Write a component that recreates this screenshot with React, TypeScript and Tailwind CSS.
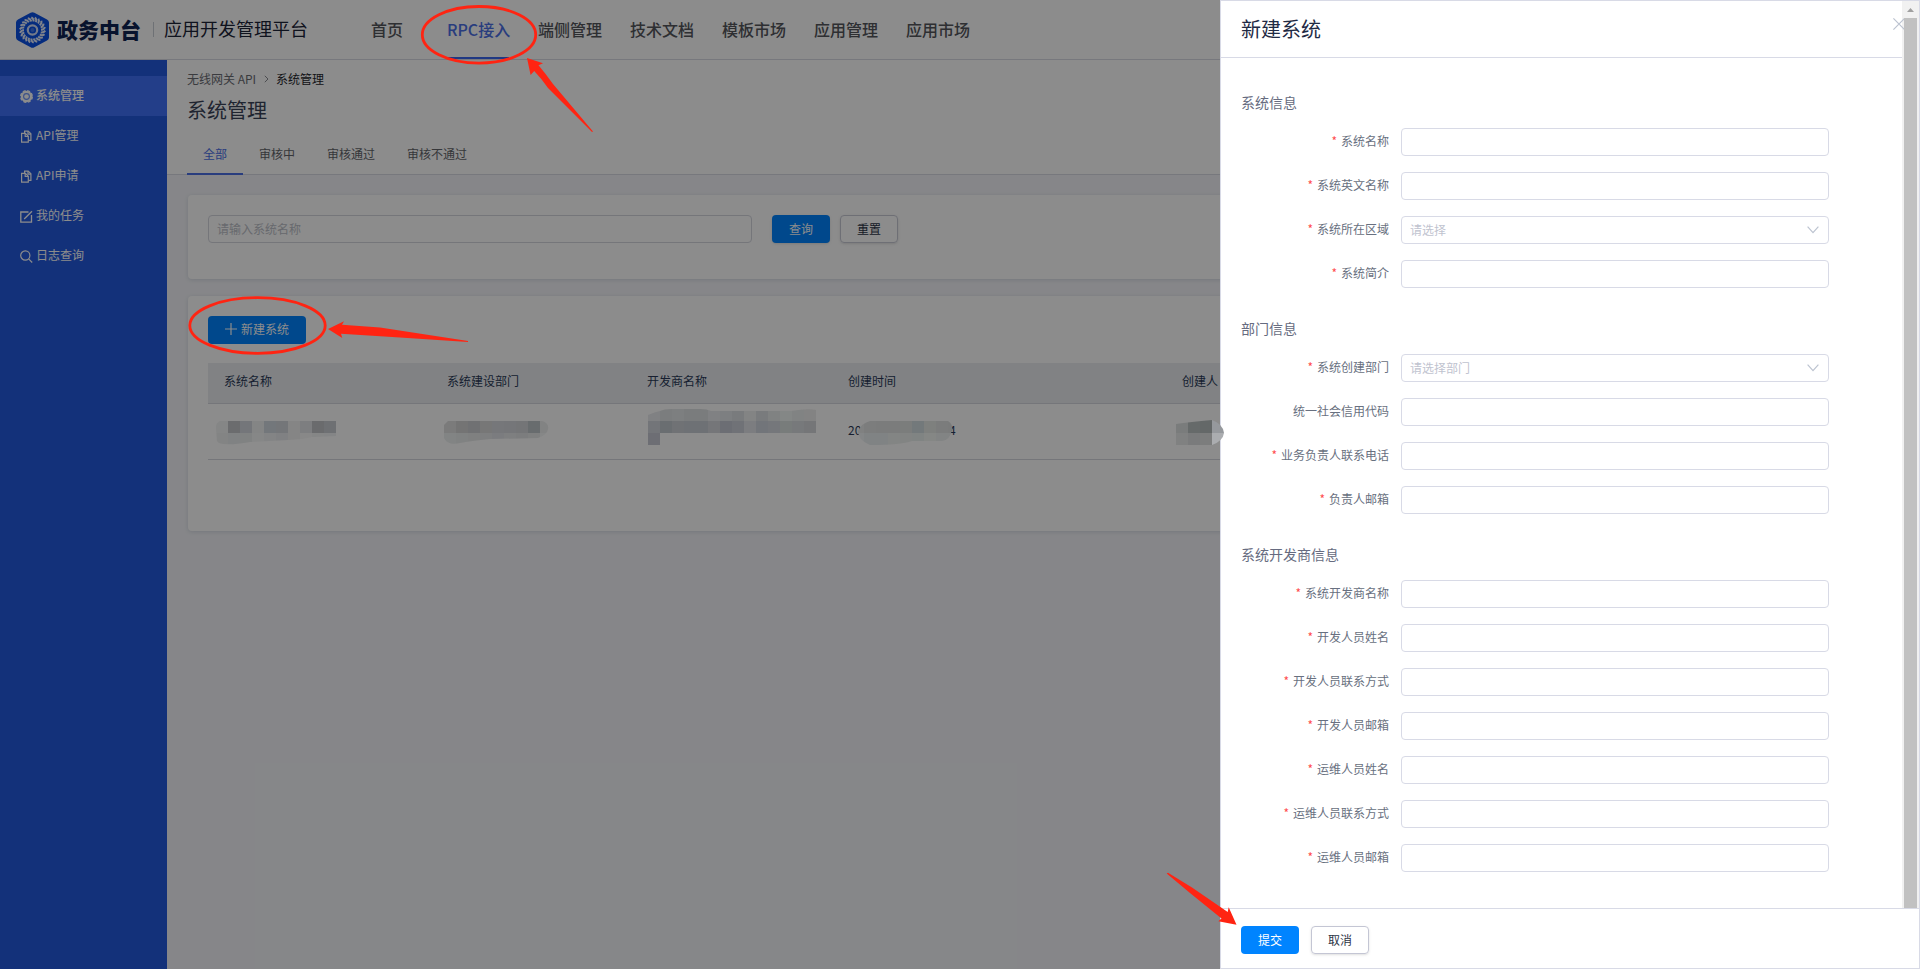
import React from "react";

type Field = { label: string; required?: boolean; placeholder?: string; select?: boolean };
type Section = { title: string; fields: Field[] };

const sections: Section[] = [
  {
    title: "系统信息",
    fields: [
      { label: "系统名称", required: true },
      { label: "系统英文名称", required: true },
      { label: "系统所在区域", required: true, placeholder: "请选择", select: true },
      { label: "系统简介", required: true },
    ],
  },
  {
    title: "部门信息",
    fields: [
      { label: "系统创建部门", required: true, placeholder: "请选择部门", select: true },
      { label: "统一社会信用代码" },
      { label: "业务负责人联系电话", required: true },
      { label: "负责人邮箱", required: true },
    ],
  },
  {
    title: "系统开发商信息",
    fields: [
      { label: "系统开发商名称", required: true },
      { label: "开发人员姓名", required: true },
      { label: "开发人员联系方式", required: true },
      { label: "开发人员邮箱", required: true },
      { label: "运维人员姓名", required: true },
      { label: "运维人员联系方式", required: true },
      { label: "运维人员邮箱", required: true },
    ],
  },
];

function Logo() {
  return (
    <svg width="33" height="36" viewBox="0 0 33 36" className="shrink-0">
      <path d="M14.6 .8a4 4 0 0 1 3.8 0L31 7.6a3.4 3.4 0 0 1 2 3v14.8a3.4 3.4 0 0 1-2 3l-12.6 6.8a4 4 0 0 1-3.8 0L2 28.400a3.400 3.400 0 0 1-2-3V10.600a3.400 3.400 0 0 1 2-3z" fill="#0a50e6" />
      {Array.from({ length: 22 }, (_, i) => (
        <path
          key={i}
          d="M15.300 5.300q2.400 1.200 2.400 4.200"
          fill="none"
          stroke="#e6edfd"
          strokeWidth="2"
          transform={`rotate(${(i * 360) / 22} 16.500 18)`}
        />
      ))}
      <circle cx="16.500" cy="18" r="4.700" fill="none" stroke="#d3dffb" strokeWidth="2.200" />
      <circle cx="16.500" cy="18" r="2" fill="#3f76ec" />
    </svg>
  );
}

function GearIcon() {
  return (
    <svg width="13" height="13" viewBox="0 0 13 13">
      <circle cx="6.500" cy="6.500" r="5.700" fill="#fff" />
      <circle cx="6.500" cy="6.500" r="5.800" fill="none" stroke="#fff" strokeWidth="1.400" strokeDasharray="3 1.555" />
      <circle cx="6.500" cy="6.500" r="2.900" fill="none" stroke="#6d92fa" strokeWidth="1.100" />
    </svg>
  );
}

function CopyIcon() {
  return (
    <svg width="13" height="13" viewBox="0 0 13 13" fill="none" stroke="#fff" strokeWidth="1.200">
      <path d="M4.600 3.200V1.100h3.600l2.700 2.700v6.600H8.700" />
      <path d="M1.600 3.400h3.800l2.900 2.900v5.900H1.600z" />
      <path d="M5.200 3.400v3.100h3.100M8 1.100v3h2.900" />
    </svg>
  );
}

function FormIcon() {
  return (
    <svg width="13" height="13" viewBox="0 0 13 13" fill="none" stroke="#fff" strokeWidth="1.300">
      <path d="M8.500 2H.8v10.200h10.700V5" />
      <path d="M4.200 9 12 1.200" />
    </svg>
  );
}

function SearchIcon() {
  return (
    <svg width="13" height="13" viewBox="0 0 13 13" fill="none" stroke="#fff" strokeWidth="1.200">
      <circle cx="5.300" cy="5.500" r="4.600" />
      <path d="m8.600 8.900 3.600 3.600" />
    </svg>
  );
}

const menu = [
  { label: "系统管理", icon: <GearIcon />, active: true },
  { label: "API管理", icon: <CopyIcon /> },
  { label: "API申请", icon: <CopyIcon /> },
  { label: "我的任务", icon: <FormIcon /> },
  { label: "日志查询", icon: <SearchIcon /> },
];

const navItems = ["端侧管理", "技术文档", "模板市场", "应用管理", "应用市场"];

function Header() {
  return (
    <header className="flex h-[60px] shrink-0 items-center border-b border-[#d9dae4] bg-white pl-4">
      <Logo />
      <span className="ml-2 w-[85px] text-[21px] leading-[57px] font-black whitespace-nowrap text-[#102452]">政务中台</span>
      <span className="ml-[11px] h-[15px] w-px bg-[#c9ced6]" />
      <span className="ml-[10px] w-[144px] pb-0.5 text-[18px] whitespace-nowrap text-[#1c2438]">应用开发管理平台</span>
      <nav className="ml-[63px] flex h-full items-center pb-px text-[16px] font-medium whitespace-nowrap text-[#54565c]">
        <span className="w-[76px]">首页</span>
        <span className="mt-px mr-[29px] flex h-[59px] w-[62px] items-center border-b-2 border-[#3b66ef] text-[#4c6fe6]">RPC接入</span>
        <span className="flex gap-7">
          {navItems.map((n) => (
            <span key={n}>{n}</span>
          ))}
        </span>
      </nav>
    </header>
  );
}

function Sidebar() {
  return (
    <aside className="w-[167px] shrink-0 bg-[#2459de] pt-4 text-[12px] text-white">
      {menu.map((m) => (
        <div key={m.label} className={m.active ? "flex h-10 items-center gap-[3px] bg-[#4072f9] pb-0.5 pl-5 font-medium" : "flex h-10 items-center gap-[3px] pb-0.5 pl-5"}>
          <span className="mt-[3px]">{m.icon}</span>
          <span>{m.label}</span>
        </div>
      ))}
    </aside>
  );
}

function Content() {
  return (
    <main className="flex flex-1 flex-col bg-[#f4f5f9] text-[12px]">
      <div className="flex h-[115px] flex-col border-b border-[#d9dae4] bg-white pl-5">
        <div className="mt-2.5 flex h-[18px] items-center text-[#6a6c73]">
          <span className="w-[77px]">无线网关 API</span>
          <svg width="5" height="8" viewBox="0 0 5 8" fill="none" stroke="#8b8d93" className="mr-[7px]">
            <path d="m.8.800 3.200 3.200L.800 7.200" />
          </svg>
          <span className="text-[#24262c]">系统管理</span>
        </div>
        <h1 className="mt-[7px] h-[30px] text-[20px] leading-[30px] text-[#3a4358]">系统管理</h1>
        <div className="mt-2.5 flex h-10 leading-[37px] text-[#63656b]">
          <span className="h-10 border-b-2 border-[#4b6fe6] px-4 text-[#4b6fe6]">全部</span>
          <span className="px-4">审核中</span>
          <span className="px-4">审核通过</span>
          <span className="px-4">审核不通过</span>
        </div>
      </div>
      <div className="mt-5 ml-[21px] flex h-[84px] rounded bg-white p-5 shadow-[0_1px_4px_rgba(30,50,90,0.14)]">
        <div className="flex h-7 w-[544px] items-center rounded border border-[#d5d7df] px-2 pb-px text-[#bcc0c8]">请输入系统名称</div>
        <button className="ml-5 h-7 w-[58px] rounded bg-[#0084ff] pb-px text-white shadow-sm">查询</button>
        <button className="ml-2.5 h-7 w-[58px] rounded border border-[#c8cad6] pb-px text-[#2c3447] shadow-sm">重置</button>
      </div>
      <div className="mt-[17px] ml-[21px] h-[235px] rounded bg-white pt-5 pl-5 shadow-[0_1px_4px_rgba(30,50,90,0.14)]">
        <button className="flex h-7 w-[98px] items-center justify-center gap-1 rounded bg-[#0084ff] pb-0.5 text-white">
          <svg width="12" height="12" viewBox="0 0 12 12" stroke="#fff" strokeWidth="1.200">
            <path d="M6 0v12M0 6h12" />
          </svg>
          新建系统
        </button>
        <div className="mt-[19px] flex h-[41px] items-center border-b border-[#d5d7df] bg-[#ebedf1] pb-1 pl-4 text-[#2a3a58]">
          <span className="w-[223px]">系统名称</span>
          <span className="w-[200px]">系统建设部门</span>
          <span className="w-[201px]">开发商名称</span>
          <span className="w-[334px]">创建时间</span>
          <span>创建人</span>
        </div>
        <div className="flex h-14 items-center border-b border-[#d5d7df] pb-[3px] pl-[640px] text-[#2a3a58]">
          <span className="w-[101px]">20</span>
          <span>4</span>
        </div>
      </div>
    </main>
  );
}

function FormRow({ label, required, placeholder, select }: Field) {
  return (
    <div className="flex h-7 items-center">
      <label className="w-[148px] pb-0.5 text-right whitespace-nowrap text-[#687080]">
        {required && <span className="mr-1 text-[#ff4d4f]">*</span>}
        {label}
      </label>
      <div className="ml-3 flex h-7 w-[428px] items-center justify-between rounded border border-[#d8dae6] pr-[9px] pl-2 text-[#bfc3cf]">
        <span className="pb-px">{placeholder}</span>
        {select && (
          <svg width="12" height="8" viewBox="0 0 12 8" fill="none" stroke="#bcc3d0" strokeWidth="1.200">
            <path d="m.6.600 5.400 6 5.400-6" />
          </svg>
        )}
      </div>
    </div>
  );
}

function Drawer() {
  return (
    <section className="absolute top-0 right-0 flex h-[969px] w-[700px] flex-col border border-[#d8dae6] bg-white text-[12px]">
      <div className="flex h-[907px]">
        <div className="w-[681px]">
          <h2 className="h-[57px] border-b border-[#d8dae6] pl-5 text-[20px] leading-[56px] text-[#1f2a44]">新建系统</h2>
          <div className="flex flex-col gap-[14px] pt-[34px] pl-5">
            {sections.map((s) => (
              <div key={s.title}>
                <h3 className="h-9 text-[14px] leading-5 text-[#666b80]">{s.title}</h3>
                <div className="flex flex-col gap-4 pb-4">
                  {s.fields.map((f) => (
                    <FormRow key={f.label} {...f} />
                  ))}
                </div>
              </div>
            ))}
          </div>
        </div>
        <div className="relative w-[17px] bg-[#f1f1f1]">
          <svg width="7" height="4" viewBox="0 0 7 4" className="absolute top-[7px] left-[5px]">
            <path d="M3.500 0 7 4H0z" fill="#a0a0a0" />
          </svg>
          <svg width="12" height="12" viewBox="0 0 12 12" className="absolute top-[17px] -left-[9px]" stroke="#bcc3d0" strokeWidth="1.200">
            <path d="m.4.400 11.200 11.200M11.600.400.400 11.600" />
          </svg>
          <div className="absolute top-[17px] bottom-0 left-[2px] w-[13px] bg-[#c1c1c1]" />
        </div>
      </div>
      <div className="flex flex-1 gap-3 border-t border-[#d8dae6] pt-[17px] pl-5">
        <button className="h-7 w-[58px] rounded bg-[#0084ff] pb-px text-white">提交</button>
        <button className="h-7 w-[58px] rounded border border-[#c4c6d4] pb-px text-[#2c3447] shadow-sm">取消</button>
      </div>
    </section>
  );
}

type Mosaic = { id: string; x: number; y: number; clip: string; rows: string[][] };

const mosaics: Mosaic[] = [
  {
    id: "name",
    x: 216,
    y: 421,
    clip: "M220 421H336V436L312 437Q300 440 288 440L250 442Q220 447 217 441L216 427Q216 423 220 421Z",
    rows: [
      ["#858686", "#6b6c6e", "#74767a", "#848585", "#73777b", "#747679", "#858585", "#7d7e80", "#6a6b6d", "#6e7073"],
      ["#838484", "#808283", "#808282", "#868787", "#838485", "#808183", "#858585", "#888888", "#858686", "#848586"],
    ],
  },
  {
    id: "dept",
    x: 444,
    y: 421,
    clip: "M448 421H542Q549 423 548 429Q547 435 538 438L490 439Q470 441 460 443Q448 446 444 438V425Z",
    rows: [
      ["#7b7b7b", "#747474", "#707173", "#777777", "#76777a", "#757679", "#747577", "#686c6e", "#828383"],
      ["#828484", "#808282", "#7f8080", "#7e7f80", "#7b7c7f", "#7e7f80", "#7c7d7e", "#7f8080", "#868787"],
    ],
  },
  {
    id: "dev",
    x: 648,
    y: 409,
    clip: "M648 415Q655 412 660 411Q664 409 672 409H700Q707 409 711 411L792 411Q808 408 816 410V433H660V445H648Z",
    rows: [
      ["#808183", "#7b7d7e", "#7d7f80", "#7a7c7d", "#7a7c7d", "#808183", "#7d7f81", "#797b7d", "#838484", "#797b7d", "#808282", "#848786", "#818383", "#838383"],
      ["#737579", "#6a6e71", "#707275", "#6e7175", "#6e7175", "#757679", "#6c6e74", "#707277", "#7c7d80", "#72757a", "#75777b", "#787c7b", "#77797b", "#757678"],
      ["#6d6e74"],
    ],
  },
  {
    id: "time",
    x: 852,
    y: 421,
    clip: "M870 421H948Q953 424 952 430Q950 440 942 441L912 441Q900 445 870 445Q858 440 858 431Q862 423 870 421Z",
    rows: [
      ["#808181", "#7c7d7d", "#7b7c7c", "#7b7c7c", "#7b7d7c", "#73797b", "#7e807e", "#7b7c7c", "#7a7b7b"],
      ["#848687", "#808384", "#808384", "#838584", "#828483", "#808483", "#858785", "#828484", "#828484"],
    ],
  },
  {
    id: "creator",
    x: 1176,
    y: 421,
    clip: "M1176 424Q1190 422 1212 420Q1223 424 1224 433Q1223 441 1212 445H1176Z",
    rows: [
      ["#7a7c7c", "#666a6a", "#646868", "#96999d"],
      ["#808181", "#7a7b7c", "#7c7d7d", "#abadb0"],
    ],
  },
];

function Annotations() {
  return (
    <svg width="1920" height="969" viewBox="0 0 1920 969" className="pointer-events-none absolute inset-0">
      {mosaics.map((m) => (
        <g key={m.id} clipPath={`url(#clip-${m.id})`} shapeRendering="crispEdges">
          <clipPath id={`clip-${m.id}`}>
            <path d={m.clip} />
          </clipPath>
          {m.rows.map((row, r) =>
            row.map((c, i) => (
              <rect key={`${r}-${i}`} x={m.x + i * 12} y={m.y + r * 12 - (r === 0 ? 1 : 0)} width="12" height={r === 0 ? 13 : 12} fill={c} />
            )),
          )}
        </g>
      ))}
      <g fill="none" stroke="#ff2412" strokeWidth="2.800">
        <ellipse cx="479" cy="34.800" rx="56.700" ry="28.300" />
        <ellipse cx="257.500" cy="325.500" rx="67.700" ry="27.800" />
      </g>
      <g fill="#ff2412">
        <path d="M527 58 543 63.300 538.500 65.200 Q546 74 553 84L593 131.500 592 132 548 88 Q541 78 534.200 71L530.600 75Z" />
        <path d="M328 329 344 321.300 342 324.700 380 327.500 468 341V342L400 337.500 341 333.700 342.300 338Z" />
        <path d="M1166.700 873.500 1168 872.700 1192 887.500 1227.700 912 1228.700 907.300 1236.500 924.700 1218.300 921.300 1221.500 918.500 1190 893Z" />
      </g>
    </svg>
  );
}

export default function App() {
  return (
    <div className="relative flex h-[969px] w-[1920px] flex-col overflow-hidden bg-white font-['Noto_Sans_CJK_SC',sans-serif]">
      <Header />
      <div className="flex flex-1">
        <Sidebar />
        <Content />
      </div>
      <div className="absolute inset-0 bg-black/45" />
      <Drawer />
      <Annotations />
    </div>
  );
}
